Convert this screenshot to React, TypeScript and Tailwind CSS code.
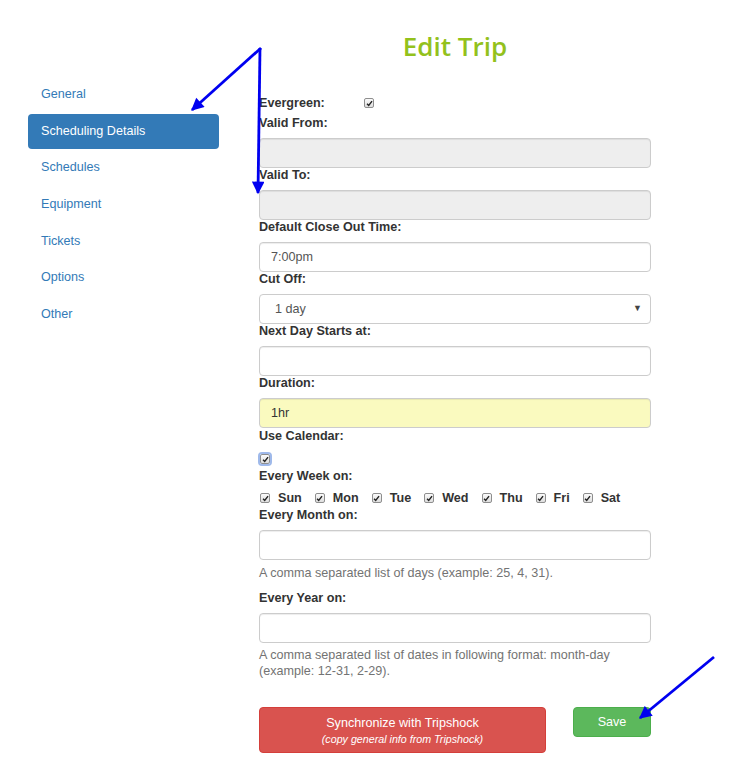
import React from 'react';

const navItems = ['General', 'Scheduling Details', 'Schedules', 'Equipment', 'Tickets', 'Options', 'Other'];
const days = ['Sun', 'Mon', 'Tue', 'Wed', 'Thu', 'Fri', 'Sat'];

function Check({ focused = false }: { focused?: boolean }) {
  return (
    <span
      className={
        'inline-flex items-center justify-center w-[10px] h-[10px] rounded-[2px] border border-[#8e8e8e] bg-gradient-to-b from-[#fbfbfb] to-[#dedede] ' +
        (focused ? 'outline outline-2 outline-[#9fb9ea]' : '')
      }
    >
      <svg width="7" height="7" viewBox="0 0 8 8">
        <path d="M1.2 4.3 L3.1 6.3 L6.9 1.3" fill="none" stroke="#222" strokeWidth="1.6" />
      </svg>
    </span>
  );
}

function Label({ children, className = '' }: { children: React.ReactNode; className?: string }) {
  return <div className={'text-[12.6px] leading-[15px] font-bold text-[#333] mb-[7px] ' + className}>{children}</div>;
}

function Input({ value = '', disabled = false, yellow = false }: { value?: string; disabled?: boolean; yellow?: boolean }) {
  return (
    <div
      className={
        'h-[30px] w-full rounded-[4px] border border-[#ccc] px-[11px] flex items-center text-[12.6px] shadow-[inset_0_1px_1px_rgba(0,0,0,0.075)] ' +
        (disabled ? 'bg-[#eee] text-[#555]' : yellow ? 'bg-[#fafabf] text-[#333]' : 'bg-white text-[#555]')
      }
    >
      {value}
    </div>
  );
}

export default function App() {
  return (
    <div className="relative w-[739px] h-[772px] bg-white overflow-hidden" style={{ fontFamily: '"Liberation Sans", Arial, sans-serif' }}>
      <div className="flex">
        {/* sidebar */}
        <div className="w-[259px] pl-[28px] pt-[77px] shrink-0">
          <ul className="w-[191px] flex flex-col gap-[1.67px]">
            {navItems.map((n) => (
              <li
                key={n}
                className={
                  'h-[35px] pl-[13px] flex items-center text-[12.6px] rounded-[4px] ' +
                  (n === 'Scheduling Details' ? 'bg-[#337ab7] text-white' : 'text-[#337ab7]')
                }
              >
                {n}
              </li>
            ))}
          </ul>
        </div>

        {/* form */}
        <div className="w-[392px]">
          <h1
            className="h-[92px] pt-[30px] text-center text-[26px] leading-[32px] font-semibold text-[#93c11c]"
            style={{ fontFamily: '"Open Sans", sans-serif' }}
          >
            Edit Trip
          </h1>

          <div className="h-[22px] flex items-center text-[12.6px] font-bold text-[#333]">
            <span className="w-[105px]">Evergreen:</span>
            <Check />
          </div>
          <Label className="mt-[2px]">Valid From:</Label>
          <Input disabled />
          <Label>Valid To:</Label>
          <Input disabled />
          <Label>Default Close Out Time:</Label>
          <Input value="7:00pm" />
          <Label>Cut Off:</Label>
          <div className="h-[30px] w-full rounded-[4px] border border-[#ccc] pl-[15px] pr-[8px] flex items-center justify-between text-[12.6px] text-[#555] bg-white">
            <span>1 day</span>
            <span className="text-[9px] text-[#444]">▼</span>
          </div>
          <Label>Next Day Starts at:</Label>
          <Input />
          <Label>Duration:</Label>
          <Input value="1hr" yellow />
          <Label className="mt-[1px]">Use Calendar:</Label>
          <div className="h-[16px] pl-[1px] flex items-center">
            <Check focused />
          </div>
          <Label className="mt-[2px] !mb-[6px]">Every Week on:</Label>
          <div className="h-[16px] flex items-center gap-[13px] pl-[1px] text-[12.6px] font-bold text-[#333]">
            {days.map((d) => (
              <span key={d} className="flex items-center gap-[8px]">
                <Check />
                {d}
              </span>
            ))}
          </div>
          <Label className="mt-[2px]">Every Month on:</Label>
          <Input />
          <p className="mt-[5px] text-[12.6px] leading-[16px] text-[#737373]">A comma separated list of days (example: 25, 4, 31).</p>
          <Label className="mt-[9.5px]">Every Year on:</Label>
          <Input />
          <p className="mt-[4.5px] text-[12.6px] leading-[16px] text-[#737373]">
            A comma separated list of dates in following format: month-day (example: 12-31, 2-29).
          </p>

          <div className="mt-[28px] flex items-start gap-[27px]">
            <button className="w-[287px] h-[46px] rounded-[4px] bg-[#d9534f] border border-[#d43f3a] text-white flex flex-col items-center justify-center">
              <span className="text-[12.6px] leading-[17px]">Synchronize with Tripshock</span>
              <span className="text-[10.7px] leading-[14px] italic">(copy general info from Tripshock)</span>
            </button>
            <button className="w-[78px] h-[30px] rounded-[4px] bg-[#5cb85c] border border-[#4cae4c] text-white text-[12.6px]">
              Save
            </button>
          </div>
        </div>
      </div>

      {/* annotation arrows */}
      <svg className="absolute inset-0 pointer-events-none" width="739" height="772">
        <defs>
          <marker id="ah" viewBox="0 0 10 10" refX="9" refY="5" markerWidth="5" markerHeight="4.5" orient="auto" markerUnits="strokeWidth">
            <path d="M0 0 L10 5 L0 10 z" fill="#0000f0" />
          </marker>
        </defs>
        <line x1="261" y1="48" x2="192" y2="110" stroke="#0000f0" strokeWidth="2.8" markerEnd="url(#ah)" />
        <line x1="260" y1="48" x2="258" y2="193" stroke="#0000f0" strokeWidth="2.8" markerEnd="url(#ah)" />
        <line x1="714" y1="657" x2="640" y2="718" stroke="#0000f0" strokeWidth="2.8" markerEnd="url(#ah)" />
      </svg>
    </div>
  );
}
